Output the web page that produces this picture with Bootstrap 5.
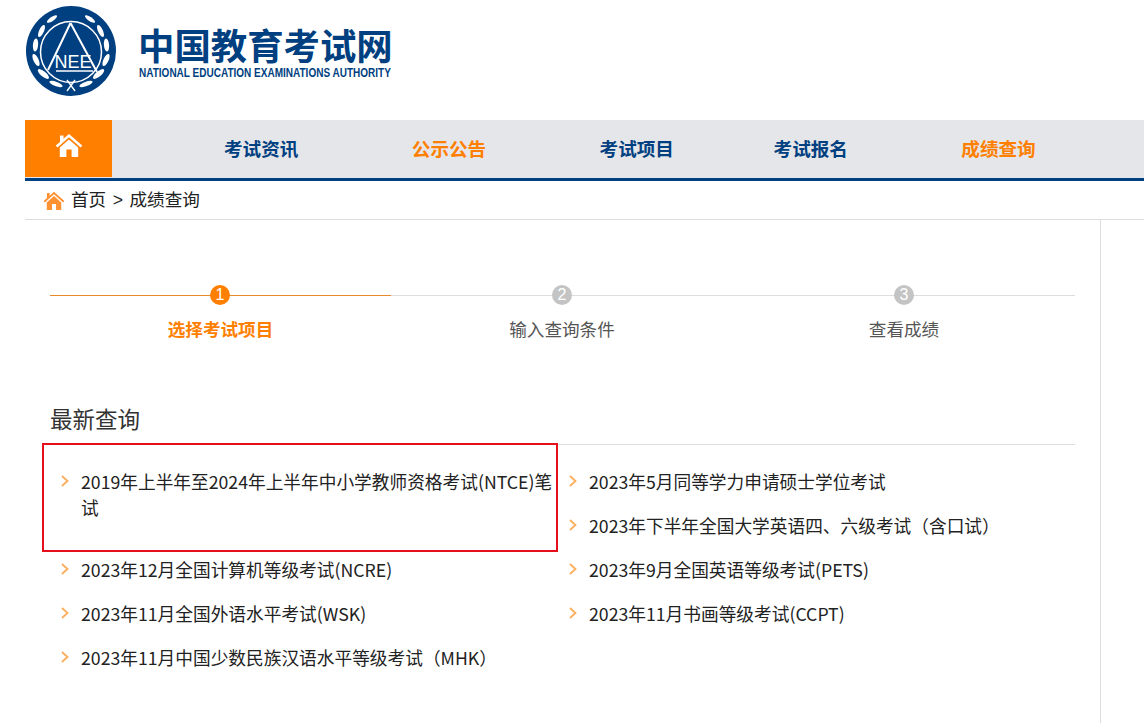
<!DOCTYPE html>
<html lang="zh-CN">
<head>
  <meta charset="UTF-8">
  <title>成绩查询</title>
  <meta name="viewport" content="width=device-width, initial-scale=1.0">
  <link rel="stylesheet" href="https://cdn.jsdelivr.net/npm/bootstrap@5.3.0/dist/css/bootstrap.min.css">
  <style>
    body {
      font-family: "Noto Sans CJK SC", "Liberation Sans", sans-serif;
      color: #222;
      overflow: hidden;
    }
    .site-head {
      height: 120px;
      padding: 6px 0 0 26px;
      gap: 22px;
    }
    .brand-cn {
      font-size: 36.4px;
      line-height: 36px;
      font-weight: 700;
      color: #003f80;
      margin-top: 20px;
    }
    .brand-en {
      font-family: "Liberation Sans", sans-serif;
      font-size: 12px;
      line-height: 12px;
      font-weight: 700;
      color: #003f80;
      margin: 5px 0 0 1px;
      white-space: nowrap;
      transform: scaleX(.834);
      transform-origin: left center;
    }
    .main-nav {
      margin-left: 25px;
      height: 61px;
      background: #e5e6ea;
      border-bottom: 3px solid #003f80;
    }
    .home-box {
      width: 87px;
      height: 57px;
      background: #ff8000;
    }
    .nav-entry {
      font-size: 18.6px;
      line-height: 26px;
      font-weight: 700;
      color: #003f80;
      margin-left: 113.4px;
      margin-bottom: 2px;
      text-decoration: none;
    }
    .nav-entry.first { margin-left: 112px; }
    .nav-entry.tight { margin-left: 99.6px; }
    .nav-entry.hot { color: #ff8000; }
    .crumbs {
      margin-left: 25px;
      height: 39px;
      padding-left: 18px;
      gap: 6px;
      font-size: 17.6px;
      border-bottom: 1px solid #ddd;
    }
    .crumbs a { color: #222; text-decoration: none; }
    .crumb-sep { margin: 0 6.5px; font-family: "Liberation Sans", sans-serif; }
    .page-body {
      margin-left: 25px;
      width: 1076px;
      height: 503px;
      padding: 0 25px;
      border-right: 1px solid #ddd;
      position: relative;
    }
    .step-row { padding-top: 65px; }
    .step-item {
      flex: 1 1 0;
      text-align: center;
      font-size: 17.6px;
      color: #555;
    }
    .step-track {
      height: 20px;
      margin-bottom: 11px;
      background: linear-gradient(#ddd, #ddd) center / 100% 1px no-repeat;
    }
    .step-item.active { flex: 0 0 341px; color: #ff8000; font-weight: 700; }
    .step-item.active .step-track {
      background-image: linear-gradient(#e8892a, #e8892a);
    }
    .step-dot {
      width: 20px;
      height: 20px;
      border-radius: 50%;
      background: #c4c4c4;
      color: #fff;
      font-family: "Liberation Sans", sans-serif;
      font-size: 16px;
      font-weight: 400;
      line-height: 20px;
    }
    .step-item.active .step-dot { background: #ff8000; margin-right: 1px; }
    .latest-title {
      font-size: 22.5px;
      font-weight: 400;
      line-height: 34px;
      margin: 59px 0 0;
      padding-bottom: 9px;
      border-bottom: 1px solid #ddd;
      color: #333;
    }
    .exam-grid {
      display: grid;
      grid-template-columns: 508px 1fr;
      grid-auto-rows: 44px;
      padding-top: 15px;
      margin: 0;
      list-style: none;
      padding-left: 0;
    }
    .exam-grid li {
      padding: 8px 5px 0 31px;
      font-size: 17.7px;
      line-height: 26px;
      position: relative;
    }
    .exam-grid li.tall { grid-row: span 2; }
    .exam-grid a { color: #222; text-decoration: none; }
    .exam-arrow {
      position: absolute;
      left: 11px;
      top: 15px;
    }
    .red-frame {
      position: absolute;
      left: 17px;
      top: 223px;
      width: 516px;
      height: 109px;
      border: 2px solid #e60f1c;
      pointer-events: none;
    }
  </style>
</head>
<body>

<svg width="0" height="0" class="position-absolute">
  <symbol id="house" viewBox="0 0 28 24">
    <path d="M27.2 12.6 14 1 8.5 5.8V2.5H5V8.9L0.8 12.6 2.4 14.4 14 4.2 25.6 14.4Z"/>
    <path d="M23.2 14.6 14 6.4 4.8 14.6V24H11.4V16.6H16.6V24H23.2Z"/>
  </symbol>
  <symbol id="chev" viewBox="0 0 8 12">
    <path d="M1 1 6.5 6 1 11" fill="none" stroke="#ffad5c" stroke-width="1.8"/>
  </symbol>
</svg>

<header class="site-head d-flex align-items-start">
  <svg width="90" height="90" viewBox="0 0 90 90" class="flex-shrink-0" role="img" aria-label="NEEA">
    <circle cx="45" cy="45" r="45" fill="#003f80"/>
    <circle cx="45" cy="46" r="30.5" fill="none" stroke="#fff" stroke-width="1.5"/>
    <path d="M44.5 17 71 66M44.5 17 22 64" stroke="#fff" stroke-width="2" fill="none"/>
    <path d="M30 65H67" stroke="#fff" stroke-width="1.4"/>
    <text x="47" y="62" text-anchor="middle" fill="#fff" font-family="Liberation Sans, sans-serif" font-size="18">NEE</text>
    <path d="M41 74 49 85M49 74 41 85" stroke="#fff" stroke-width="1.4"/>
    <g fill="#fff">
      <ellipse cx="30" cy="78" rx="7" ry="2.2" transform="rotate(20 30 78)"/>
      <ellipse cx="60" cy="78" rx="7" ry="2.2" transform="rotate(-20 60 78)"/>
      <ellipse cx="17.4" cy="68" rx="7" ry="2.6" transform="rotate(40 17.4 68)"/>
      <ellipse cx="72.6" cy="68" rx="7" ry="2.6" transform="rotate(-40 72.6 68)"/>
      <ellipse cx="10" cy="54" rx="6.5" ry="2.6" transform="rotate(65 10 54)"/>
      <ellipse cx="80" cy="54" rx="6.5" ry="2.6" transform="rotate(-65 80 54)"/>
      <ellipse cx="9.5" cy="39" rx="6.5" ry="2.6" transform="rotate(95 9.5 39)"/>
      <ellipse cx="80.5" cy="39" rx="6.5" ry="2.6" transform="rotate(-95 80.5 39)"/>
      <ellipse cx="15.5" cy="25" rx="6.5" ry="2.4" transform="rotate(115 15.5 25)"/>
      <ellipse cx="74.5" cy="25" rx="6.5" ry="2.4" transform="rotate(-115 74.5 25)"/>
      <ellipse cx="26" cy="13" rx="6" ry="2" transform="rotate(145 26 13)"/>
      <ellipse cx="64" cy="13" rx="6" ry="2" transform="rotate(-145 64 13)"/>
    </g>
  </svg>
  <div>
    <div class="brand-cn">中国教育考试网</div>
    <div class="brand-en">NATIONAL EDUCATION EXAMINATIONS AUTHORITY</div>
  </div>
</header>

<nav class="main-nav d-flex align-items-start">
  <a class="home-box d-flex align-items-center justify-content-center" href="#" aria-label="首页">
    <svg width="28" height="24" fill="#fff" style="margin-bottom:7px"><use href="#house"/></svg>
  </a>
  <div class="d-flex align-items-center h-100">
    <a class="nav-entry first" href="#">考试资讯</a>
    <a class="nav-entry hot" href="#">公示公告</a>
    <a class="nav-entry" href="#">考试项目</a>
    <a class="nav-entry tight" href="#">考试报名</a>
    <a class="nav-entry hot" href="#">成绩查询</a>
  </div>
</nav>

<div class="crumbs d-flex align-items-center">
  <svg width="22" height="19" fill="#ff9233"><use href="#house"/></svg>
  <span><a href="#">首页</a><span class="crumb-sep">&gt;</span><a href="#">成绩查询</a></span>
</div>

<main class="page-body">
  <div class="step-row d-flex">
    <div class="step-item active">
      <div class="step-track d-flex justify-content-center"><span class="step-dot">1</span></div>
      选择考试项目
    </div>
    <div class="step-item">
      <div class="step-track d-flex justify-content-center"><span class="step-dot">2</span></div>
      输入查询条件
    </div>
    <div class="step-item">
      <div class="step-track d-flex justify-content-center"><span class="step-dot">3</span></div>
      查看成绩
    </div>
  </div>

  <h2 class="latest-title">最新查询</h2>

  <ul class="exam-grid">
    <li class="tall"><svg class="exam-arrow" width="8" height="12"><use href="#chev"/></svg><a href="#">2019年上半年至2024年上半年中小学教师资格考试(NTCE)笔试</a></li>
    <li><svg class="exam-arrow" width="8" height="12"><use href="#chev"/></svg><a href="#">2023年5月同等学力申请硕士学位考试</a></li>
    <li><svg class="exam-arrow" width="8" height="12"><use href="#chev"/></svg><a href="#">2023年下半年全国大学英语四、六级考试（含口试）</a></li>
    <li><svg class="exam-arrow" width="8" height="12"><use href="#chev"/></svg><a href="#">2023年12月全国计算机等级考试(NCRE)</a></li>
    <li><svg class="exam-arrow" width="8" height="12"><use href="#chev"/></svg><a href="#">2023年9月全国英语等级考试(PETS)</a></li>
    <li><svg class="exam-arrow" width="8" height="12"><use href="#chev"/></svg><a href="#">2023年11月全国外语水平考试(WSK)</a></li>
    <li><svg class="exam-arrow" width="8" height="12"><use href="#chev"/></svg><a href="#">2023年11月书画等级考试(CCPT)</a></li>
    <li><svg class="exam-arrow" width="8" height="12"><use href="#chev"/></svg><a href="#">2023年11月中国少数民族汉语水平等级考试（MHK）</a></li>
  </ul>

  <div class="red-frame"></div>
</main>

<script src="https://cdn.jsdelivr.net/npm/bootstrap@5.3.0/dist/js/bootstrap.bundle.min.js"></script>
</body>
</html>
